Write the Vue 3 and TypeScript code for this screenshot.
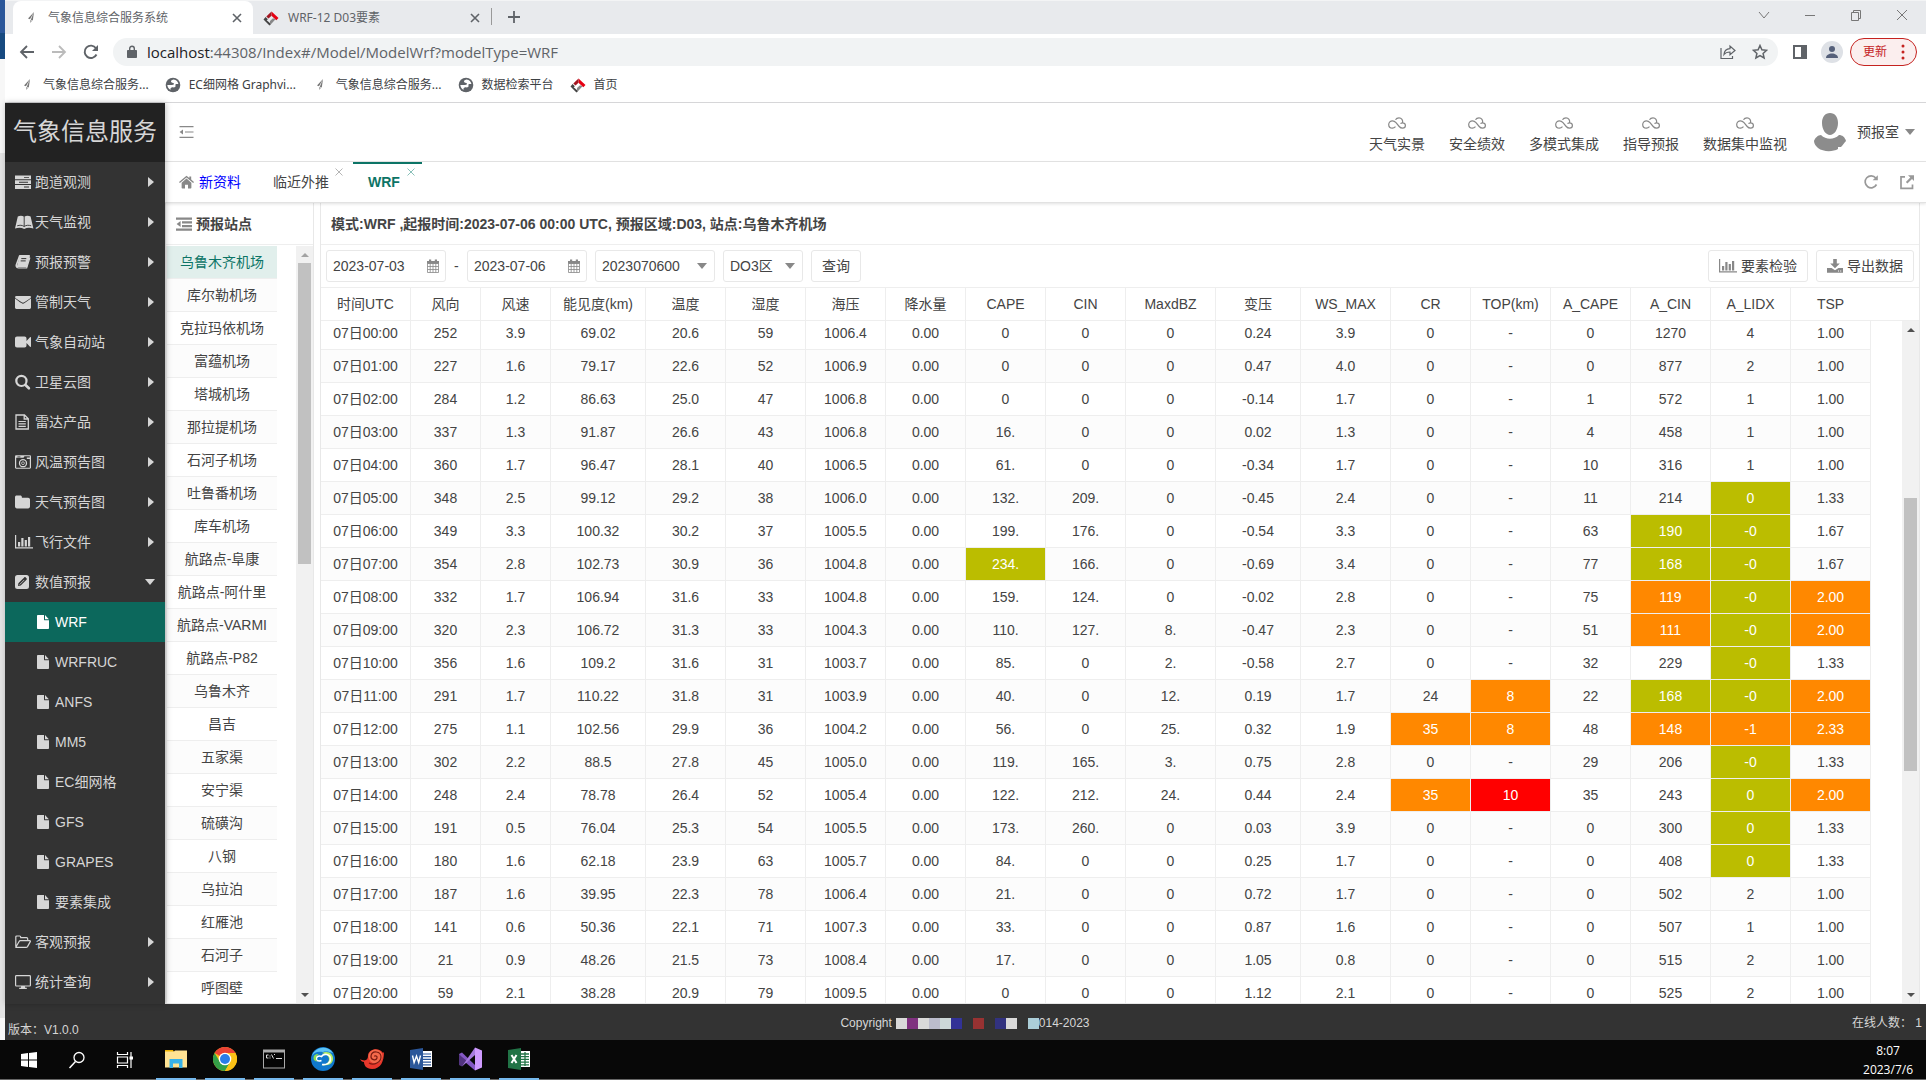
<script setup lang="ts">
import { onMounted, ref } from 'vue'

interface MenuItem {
  label: string
  icon: string
  open?: boolean
  children?: string[]
}

// Icon bodies drawn on a 16 x 16 grid, coloured by the surrounding text
const icons: Record<string, string> = {
  server:
    '<path fill="currentColor" fill-rule="evenodd" d="M0 1.5h16v3.8H0zM0 6.3h16v3.8H0zM0 11.1h16v3.8H0zM9 2.9v.9h5v-.9zM4 7.8v.9h9v-.9zM9 12.5v.9h5v-.9z"/>',
  book:
    '<path fill="currentColor" d="M2.800 2.500C5 1.500 7.500 1.500 9.200 3c1.700-1.500 4.200-1.500 6.400-.5L18.400 14.500c-3.400-1-6.400-1-9.200.5-2.800-1.500-5.800-1.500-9.200-.5z"/><path stroke="#333" stroke-width=".9" fill="none" d="M9.200 3v9.500M9.200 12.500c-2-1.500-4.500-1.500-7-.7M9.200 12.500c2-1.500 4.500-1.500 7-.7"/>',
  notebook:
    '<path fill="none" stroke="currentColor" stroke-width="1.600" stroke-linejoin="round" d="M4.700 1.800h9.500l-2.800 10.700H2.500c-1.200 0-1.400-.6-1.200-1.400z"/><path fill="currentColor" d="M4.700 1.800h9.500l-2.800 10.200H2z"/><path stroke="#333" stroke-width="1" d="M6.300 4.600h5M5.700 6.900h5"/><path fill="none" stroke="currentColor" stroke-width="1.200" d="M1.200 12c.2 1.800 1.500 2 2.300 2h8.200l3.200-10.500"/>',
  mail:
    '<path fill="currentColor" d="M0 4.400c2.300 1.800 4.600 3.400 6.400 4.700 1.100.7 2 .7 3.200 0L16 4.400v9.100c0 .8-.6 1.400-1.400 1.400H1.400C.6 14.900 0 14.300 0 13.500zM1.400 1.900h13.200c2 0 1.600 1.800.4 2.600L9.300 8.200c-.9.6-1.700.6-2.600 0L1 4.500C-.3 3.600-.3 1.900 1.400 1.900z"/>',
  video:
    '<path fill="currentColor" d="M2 2.500h7.500c1.200 0 2 .8 2 2V7L15 3.300c.4-.4 1-.2 1 .4v8.600c0 .6-.6.8-1 .4L11.500 9v2.500c0 1.200-.8 2-2 2H2c-1.200 0-2-.8-2-2v-7c0-1.200.8-2 2-2z"/>',
  search:
    '<circle cx="6.400" cy="6.900" r="5.100" fill="none" stroke="currentColor" stroke-width="2.200"/><path stroke="currentColor" stroke-width="2.600" stroke-linecap="round" d="m10.500 11 3.400 3.300"/>',
  doc:
    '<path fill="none" stroke="currentColor" stroke-width="1.300" d="M1 1h8.500L13.300 4.800V15H1zM9.200 1v4h4"/><path stroke="currentColor" stroke-width="1.200" d="M3.500 7.500h7.300M3.500 9.900h7.300M3.500 12.300h7.300"/>',
  camera:
    '<path fill="currentColor" fill-rule="evenodd" d="M1.200 1.200h13.600c.7 0 1.200.5 1.200 1.200v11.200c0 .7-.5 1.200-1.200 1.200H1.200c-.7 0-1.200-.5-1.200-1.200V2.400c0-.7.500-1.200 1.200-1.200zM1.200 5v8.700h13.600V5h-3V3.500h3V2.300H9.500L8.500 3.800H1.200zm1.200-2.500v.8h3v-.8z"/><circle cx="8" cy="9.200" r="3.500" fill="none" stroke="currentColor" stroke-width="1.300"/><circle cx="8" cy="9.200" r="1.400" fill="none" stroke="currentColor" stroke-width=".8"/>',
  folder:
    '<path fill="currentColor" d="M1.700 1.500h3.500c1 0 1.700.7 1.700 1.700v.5h6.200c1.100 0 1.900.8 1.900 1.900v7c0 1.100-.8 1.900-1.900 1.900H1.900C.8 14.500 0 13.700 0 12.600V3.200c0-1 .7-1.700 1.700-1.700z"/>',
  chart:
    '<path fill="currentColor" d="M0 1h1.200v12.300H18v1.200H0zM3 8h2.200v4.500H3zM6.300 4h2.200v8.500H6.300zM9.700 6h2.200v6.500H9.700zM13 3h2.200v9.500H13z"/>',
  edit:
    '<path fill="currentColor" fill-rule="evenodd" d="M2.500 1h9A2.500 2.500 0 0 1 14 3.500v9a2.500 2.500 0 0 1-2.500 2.500h-9A2.500 2.500 0 0 1 0 12.500v-9A2.500 2.500 0 0 1 2.500 1zM3 12l.4-2.800 5.800-5.800c.5-.4 1-.4 1.500 0l.8.9c.5.500.5 1 0 1.500L5.700 11.600z"/><path stroke="currentColor" stroke-width=".8" d="m4.600 10.600 4.700-4.700"/>',
  file:
    '<path fill="currentColor" d="M0 1.800C0 1.400.4 1 .8 1H7v4.400c0 .5.400.9.900.9H12v7.900c0 .4-.4.8-.8.8H.8c-.4 0-.8-.4-.8-.8zM8 1.100 11.900 5.200H8z"/>',
  folderOpen:
    '<path fill="none" stroke="currentColor" stroke-width="1.200" stroke-linejoin="round" d="M.8 12.600V3c0-.6.400-1 1-1h2.900c.7 0 1 .5 1 1.100v.6h5.800c.7 0 1.200.4 1.200 1.100v1.900M.8 13.200l3.300-5.700c.3-.5.700-.8 1.300-.8h9.300c.7 0 .9.400.6.900l-2.800 5c-.3.500-.8.800-1.400.8H1.300c-.4 0-.6-.1-.5-.2z"/>',
  monitor:
    '<path fill="none" stroke="currentColor" stroke-width="1.200" d="M1.400 1.600h13.200c.5 0 .8.300.8.800v8.800c0 .5-.3.800-.8.800H1.400c-.5 0-.8-.3-.8-.8V2.400c0-.5.3-.8.8-.8z"/><path fill="currentColor" d="M6.200 12h3.600l.4 1.800h1.600V15H4.200v-1.200h1.600z"/>',
  home:
    '<path fill="currentColor" d="M8 4.300 13.200 8.700v5.400c0 .5-.3.800-.8.800H9.600v-4H6.400v4H3.600c-.5 0-.8-.3-.8-.8V8.700zM8 1.200l3 2.500V2.100h2v3.300L16 8l-.9 1L8 3.100.9 9 0 8z"/>',
  outdent:
    '<path fill="currentColor" d="M0 1.500h16v2.300H0zM6 5.200h10v2.300H6zM6 8.900h10v2.300H6zM0 12.500h16v2.300H0zM4.600 5v6L.6 8z"/>',
  menuFold:
    '<path fill="currentColor" d="M.5 2h14v1.200H.5zM6 7.400h8.500v1.200H6zM.5 12.800h14V14H.5zM4 5.600v4.800L.6 8z"/>',
  calendar:
    '<path fill="none" stroke="currentColor" stroke-width=".8" d="M2.500 5.500h11v9h-11zM5.200 5.500v9M8 5.500v9M10.800 5.500v9M2.500 8.500h11M2.500 11.500h11"/><path fill="currentColor" d="M2 3h12v2.800H2zM4 1.500h2.200v3H4zM9.800 1.500H12v3H9.800z"/>',
  download:
    '<path fill="currentColor" d="M6.200 1h3.600v4.500h3L8 10.200 3.200 5.500h3zM0 10h4.500L8 12.300 11.500 10H16v4.800H0z"/><path fill="#fff" d="M11 12.500h1v1h-1zM13.200 12.500h1v1h-1z"/>',
  // drawn on an 18 x 12 grid
  cloud:
    '<path fill="none" stroke="currentColor" stroke-width="1.200" stroke-linejoin="round" d="M7.500 9.700C6.500 10.700 5.500 11.200 4.400 11.200 2.200 11.200.7 9.600.7 7.500S2.400 3.800 4.500 3.800c1.600 0 2.600.8 3.500 1.900l3.200 3.800c1 1.200 2.100 1.700 3.400 1.700 1.700 0 2.800-1.200 2.800-2.700 0-1.700-1.200-2.700-2.900-2.700C15.300 3.200 13.500.8 11 .8 9.400.8 8.200 1.500 7.500 2.700M14.500 5.800c-.8 0-1.500.3-2 .8"/>',
  refresh:
    '<path fill="none" stroke="currentColor" stroke-width="1.700" d="M13.500 10.500A6 6 0 1 1 12.800 4"/><path fill="currentColor" d="M14.800 1.200v5H9.600z"/>',
  external:
    '<path fill="none" stroke="currentColor" stroke-width="1.700" d="M6 2.800H2v11.500h11.500V10.500"/><path fill="currentColor" d="M9 1.200h6V7l-2-2-4.600 4.500-1.500-1.400L11.300 3.400z"/>',
}

const menu: MenuItem[] = [
  { label: '跑道观测', icon: 'server' },
  { label: '天气监视', icon: 'book' },
  { label: '预报预警', icon: 'notebook' },
  { label: '管制天气', icon: 'mail' },
  { label: '气象自动站', icon: 'video' },
  { label: '卫星云图', icon: 'search' },
  { label: '雷达产品', icon: 'doc' },
  { label: '风温预告图', icon: 'camera' },
  { label: '天气预告图', icon: 'folder' },
  { label: '飞行文件', icon: 'chart' },
  {
    label: '数值预报',
    icon: 'edit',
    open: true,
    children: ['WRF', 'WRFRUC', 'ANFS', 'MM5', 'EC细网格', 'GFS', 'GRAPES', '要素集成'],
  },
  { label: '客观预报', icon: 'folderOpen' },
  { label: '统计查询', icon: 'monitor' },
]

const shortcuts = ['天气实景', '安全绩效', '多模式集成', '指导预报', '数据集中监视']

const stations = [
  '乌鲁木齐机场', '库尔勒机场', '克拉玛依机场', '富蕴机场', '塔城机场', '那拉提机场',
  '石河子机场', '吐鲁番机场', '库车机场', '航路点-阜康', '航路点-阿什里', '航路点-VARMI',
  '航路点-P82', '乌鲁木齐', '昌吉', '五家渠', '安宁渠', '硫磺沟', '八钢', '乌拉泊', '红雁池',
  '石河子', '呼图壁',
]

const columns: [string, number][] = [
  ['时间UTC', 90], ['风向', 70], ['风速', 70], ['能见度(km)', 95], ['温度', 80], ['湿度', 80],
  ['海压', 80], ['降水量', 80], ['CAPE', 80], ['CIN', 80], ['MaxdBZ', 90], ['变压', 85],
  ['WS_MAX', 90], ['CR', 80], ['TOP(km)', 80], ['A_CAPE', 80], ['A_CIN', 80], ['A_LIDX', 80],
  ['TSP', 80],
]

// A trailing letter after "|" marks the alert level: y yellow, o orange, r red
const rows = `
07日00:00 252 3.9 69.02 20.6 59 1006.4 0.00 0 0 0 0.24 3.9 0 - 0 1270 4 1.00
07日01:00 227 1.6 79.17 22.6 52 1006.9 0.00 0 0 0 0.47 4.0 0 - 0 877 2 1.00
07日02:00 284 1.2 86.63 25.0 47 1006.8 0.00 0 0 0 -0.14 1.7 0 - 1 572 1 1.00
07日03:00 337 1.3 91.87 26.6 43 1006.8 0.00 16. 0 0 0.02 1.3 0 - 4 458 1 1.00
07日04:00 360 1.7 96.47 28.1 40 1006.5 0.00 61. 0 0 -0.34 1.7 0 - 10 316 1 1.00
07日05:00 348 2.5 99.12 29.2 38 1006.0 0.00 132. 209. 0 -0.45 2.4 0 - 11 214 0|y 1.33
07日06:00 349 3.3 100.32 30.2 37 1005.5 0.00 199. 176. 0 -0.54 3.3 0 - 63 190|y -0|y 1.67
07日07:00 354 2.8 102.73 30.9 36 1004.8 0.00 234.|y 166. 0 -0.69 3.4 0 - 77 168|y -0|y 1.67
07日08:00 332 1.7 106.94 31.6 33 1004.8 0.00 159. 124. 0 -0.02 2.8 0 - 75 119|o -0|y 2.00|o
07日09:00 320 2.3 106.72 31.3 33 1004.3 0.00 110. 127. 8. -0.47 2.3 0 - 51 111|o -0|y 2.00|o
07日10:00 356 1.6 109.2 31.6 31 1003.7 0.00 85. 0 2. -0.58 2.7 0 - 32 229 -0|y 1.33
07日11:00 291 1.7 110.22 31.8 31 1003.9 0.00 40. 0 12. 0.19 1.7 24 8|o 22 168|y -0|y 2.00|o
07日12:00 275 1.1 102.56 29.9 36 1004.2 0.00 56. 0 25. 0.32 1.9 35|o 8|o 48 148|o -1|o 2.33|o
07日13:00 302 2.2 88.5 27.8 45 1005.0 0.00 119. 165. 3. 0.75 2.8 0 - 29 206 -0|y 1.33
07日14:00 248 2.4 78.78 26.4 52 1005.4 0.00 122. 212. 24. 0.44 2.4 35|o 10|r 35 243 0|y 2.00|o
07日15:00 191 0.5 76.04 25.3 54 1005.5 0.00 173. 260. 0 0.03 3.9 0 - 0 300 0|y 1.33
07日16:00 180 1.6 62.18 23.9 63 1005.7 0.00 84. 0 0 0.25 1.7 0 - 0 408 0|y 1.33
07日17:00 187 1.6 39.95 22.3 78 1006.4 0.00 21. 0 0 0.72 1.7 0 - 0 502 2 1.00
07日18:00 141 0.6 50.36 22.1 71 1007.3 0.00 33. 0 0 0.87 1.6 0 - 0 507 1 1.00
07日19:00 21 0.9 48.26 21.5 73 1008.4 0.00 17. 0 0 1.05 0.8 0 - 0 515 2 1.00
07日20:00 59 2.1 38.28 20.9 79 1009.5 0.00 0 0 0 1.12 2.1 0 - 0 525 2 1.00`
  .trim()
  .split('\n')
  .map((line) => line.split(' ').map((cell) => cell.split('|')))

const levelClass: Record<string, string> = { y: 'lv-yellow', o: 'lv-orange', r: 'lv-red' }

const startDate = ref('2023-07-03')
const endDate = ref('2023-07-06')
const runTime = ref('2023070600')
const region = ref('DO3区')
const activeStation = ref(stations[0])
const gridBody = ref<HTMLElement | null>(null)

onMounted(() => {
  if (gridBody.value) gridBody.value.scrollTop = 4
})

const bookmarks = [
  { label: '气象信息综合服务...', icon: 'feather' },
  { label: 'EC细网格 Graphvi...', icon: 'globe' },
  { label: '气象信息综合服务...', icon: 'feather' },
  { label: '数据检索平台', icon: 'globe' },
  { label: '首页', icon: 'brand' },
]

const siteIcons: Record<string, string> = {
  feather:
    '<path fill="#777" d="M11 2 5 8.500l2 .8zM11 2 7.800 9.800l2 .6zM7.300 10l1.500.7-1.300 2.300z"/>',
  globe:
    '<circle cx="8" cy="8" r="7.300" fill="#5f6368"/><path fill="#fff" d="M8.500 2.500c-2 .3-3 1.500-2.300 2.600.5.900 1.800.6 2.500 1.200.8.800-.2 1.700-1.700 1.700H2.300c.2 2.300 1.500 4 3.200 4.900-.2-1.300.2-2.300 1.300-2.500 1.300-.2 2.600.4 3.500-.6.8-1-.3-1.600.2-2.400.5-.7 1.700-.4 2.900-.3-.3-2.200-2-4.300-4.900-4.600z"/>',
  brand:
    '<path fill="#e60012" d="M8.500 1.500 15.500 8l-2.200 2.300-4.800-4.600z"/><path fill="#a31621" d="M8.500 1.500v4.200L5.500 8.500 3.300 6.400z"/><path fill="#444" d="m2.600 7 2.300 2.200-1.200 1L8 14l-1.500 1.500L.5 9.500z"/><path fill="#888" d="m12.500 9.300-5.500 6V11l3-2.800z"/>',
}

const taskApps: { name: string; art: string }[] = [
  {
    name: '文件资源管理器',
    art: '<path fill="#f0b400" d="M1 3h8l1 2H1z"/><path fill="#ffe394" d="M1 4.500h9l1-1h12v17H1z"/><path fill="#37b1e8" d="M5.500 12h13v9h-3.500v-4.500H9V21H5.500z"/>',
  },
  {
    name: 'Chrome',
    art: '<circle cx="12" cy="12" r="12" fill="#fbc116"/><path fill="#ea4335" d="M12 12 1.600 6A12 12 0 0 1 22.400 6H12z"/><path fill="#34a048" d="M1.600 6A12 12 0 0 0 12 24l5.200-9L12 12 7 15z"/><path fill="#fbc116" d="M12 24A12 12 0 0 0 22.400 6H12l5.200 9z"/><circle cx="12" cy="12" r="6.300" fill="#fff"/><circle cx="12" cy="12" r="5" fill="#2b7de9"/>',
  },
  {
    name: '命令提示符',
    art: '<rect x="1" y="2.500" width="22" height="19" fill="#aaa"/><rect x="2" y="5.500" width="20" height="15" fill="#050505"/><path fill="none" stroke="#ddd" d="M6.500 8H4.500v3h2M8 8.500v1M8 10.500v1M9.500 7.500l2 4M12 7.500h1M14 11.500h6"/>',
  },
  {
    name: '浏览器',
    art: '<circle cx="12" cy="12" r="12" fill="#1078cc"/><path fill="#5cc3f5" d="M1 9C3 1 16-3 22 6c-3-1-7-2-10-1-5-1-9 0-11 4z"/><path fill="#b4ee62" d="M11 6c6-3 12 1 11 7-1 5-7 6-12 5 4 0 8-2 8-6 0-3-3-5-7-6z"/><path fill="none" stroke="#fff" stroke-width="1.600" d="M11 17.500c4 .5 8.500-1 8.500-5.500 0-5-7-6-9-2.500-3-1.500-6 .5-5 3 1 2 3.500 1.500 5 1"/><path fill="#8ddf4f" d="M2.500 11c0-3 2.500-4.500 5.500-4-2 1-3 2-3 5 0 1 .5 2 1.500 2.500-2.500 0-4-1.500-4-3.500z"/>',
  },
  {
    name: '螺旋',
    art: '<path fill="#e8372b" d="M0 12c5 3 8 1 8-3 0-8 12-9 15-3l1-1c0 9-3 17-12 17C6 22 4 18 4 15c-2 0-3-1-4-3z"/><circle cx="15.500" cy="9.500" r="7" fill="#f4694a"/><path fill="none" stroke="#7a1b12" stroke-width="1.200" d="M9 16c5 3 12-1 12-6 0-6-9-7-10-1-.5 4 5 5 6 2 .7-2-2-3-2.600-1.500"/>',
  },
  {
    name: 'Word',
    art: '<path fill="#fff" d="M12 4h11v16H12z"/><path stroke="#2b579a" stroke-width="1.200" d="M14 7h8M14 9.700h8M14 12.400h8M14 15.100h8M14 17.800h8"/><path fill="#2b579a" d="M1 3 14 1v22L1 21z"/><path fill="none" stroke="#fff" stroke-width="1.400" d="m3.500 8.500 1.600 7 2.400-6.500 2.200 6.500 1.800-7"/>',
  },
  {
    name: 'Visual Studio',
    art: '<path fill="#8458c4" d="M1 7 4 5.500 17 18v5.500L1 10z"/><path fill="#52347f" d="M1 7v11l3 1.500L9 14l-5-4z"/><path fill="#a77be0" d="M4 19.500 17 .5V8z"/><path fill="#cf9bff" d="m17 .5 7 3v17l-7 3z"/>',
  },
  {
    name: 'Excel',
    art: '<path fill="#fff" d="M12 4h11v16H12z"/><path fill="none" stroke="#217346" stroke-width="1.300" d="M14 7h8M14 9.700h8M14 12.400h8M14 15.100h8M14 17.800h8M18 5v14"/><path fill="#217346" d="M1 3 14 1v22L1 21z"/><path fill="none" stroke="#fff" stroke-width="2" d="m4.500 8 5 8M9.500 8l-5 8"/>',
  },
]

const mosaic = [
  '#d9d9d9', '#7f317f', '#d9d9d9', '#bbbccc', '#cdd8d8', '#323296', 'transparent', '#983232',
  'transparent', '#32327f', '#d9d9d9', 'transparent', '#abced8',
]
</script>

<template>
  <div class="desktop">
    <div class="window">
      <div class="behind" aria-hidden="true"></div>
      <div class="browser">
        <div class="tabstrip">
          <div class="btab active">
            <svg class="i16" viewBox="0 0 16 16" v-html="siteIcons.feather"></svg>
            <span class="btitle">气象信息综合服务系统</span>
            <button class="plain" aria-label="关闭标签页">
              <svg width="10" height="10" viewBox="0 0 10 10"><path d="m1 1 8 8M9 1 1 9" stroke="#5f6368" stroke-width="1.600" /></svg>
            </button>
          </div>
          <div class="btab second">
            <svg class="i16" viewBox="0 0 16 16" v-html="siteIcons.brand"></svg>
            <span class="btitle">WRF-12 D03要素</span>
            <button class="plain" aria-label="关闭标签页">
              <svg width="10" height="10" viewBox="0 0 10 10"><path d="m1 1 8 8M9 1 1 9" stroke="#5f6368" stroke-width="1.600" /></svg>
            </button>
          </div>
          <button class="plain newtab" aria-label="新标签页">
            <svg width="12" height="12" viewBox="0 0 12 12"><path d="M6 0v12M0 6h12" stroke="#5f6368" stroke-width="1.800" /></svg>
          </button>
          <div class="wincontrols">
            <button class="plain" aria-label="搜索标签页"><svg width="12" height="12" viewBox="0 0 12 12"><path d="m1 3 5 6 5-6" fill="none" stroke="#777" /></svg></button>
            <button class="plain" aria-label="最小化"><svg width="12" height="12" viewBox="0 0 12 12"><path d="M1 6.500h10" stroke="#777" /></svg></button>
            <button class="plain" aria-label="还原"><svg width="12" height="12" viewBox="0 0 12 12"><path d="M1.500 3.500h7v8h-7zM3.500 3.500v-2h7v8h-2" fill="none" stroke="#777" /></svg></button>
            <button class="plain" aria-label="关闭"><svg width="12" height="12" viewBox="0 0 12 12"><path d="m1 1 10 10M11 1 1 11" stroke="#777" /></svg></button>
          </div>
        </div>

        <div class="toolbar">
          <button class="plain" aria-label="后退"><svg width="16" height="16" viewBox="0 0 16 16"><path d="M15 8H2M8 2 2 8l6 6" fill="none" stroke="#5f6368" stroke-width="1.800" /></svg></button>
          <button class="plain" aria-label="前进"><svg width="16" height="16" viewBox="0 0 16 16"><path d="M1 8h13M8 2l6 6-6 6" fill="none" stroke="#bbb" stroke-width="1.800" /></svg></button>
          <button class="plain" aria-label="重新加载"><svg width="16" height="16" viewBox="0 0 16 16"><path d="M13.500 10.500A6.200 6.200 0 1 1 13 4.300" fill="none" stroke="#5f6368" stroke-width="1.900" /><path d="M15 1v6H9z" fill="#5f6368" /></svg></button>
          <div class="omnibox">
            <svg width="10" height="14" viewBox="0 0 10 14"><path d="M1 5h8c.5 0 1 .4 1 1v6c0 .6-.5 1-1 1H1c-.5 0-1-.4-1-1V6c0-.6.500-1 1-1z" fill="#5f6368" /><path d="M2.700 6V3.500c0-3 4.600-3 4.600 0V6" fill="none" stroke="#5f6368" stroke-width="1.400" /></svg>
            <span class="url"><b>localhost</b>:44308/Index#/Model/ModelWrf?modelType=WRF</span>
            <button class="plain" aria-label="分享"><svg width="16" height="16" viewBox="0 0 16 16"><path d="M1 4v10.500h11.500v-2.500M4 10.500c.3-4 2.300-5.700 6-5.800V2l5 4.500-5 4.300V8C7.500 8 5.500 8.500 4 10.500z" fill="none" stroke="#5f6368" stroke-width="1.200" /></svg></button>
            <button class="plain" aria-label="收藏"><svg width="16" height="16" viewBox="0 0 16 16"><path d="m8 1.500 1.900 4.300 4.700.5-3.500 3.100 1 4.600L8 11.600 3.900 14l1-4.600-3.500-3.100 4.700-.5z" fill="none" stroke="#5f6368" stroke-width="1.500" /></svg></button>
          </div>
          <button class="plain" aria-label="侧边栏"><svg width="14" height="14" viewBox="0 0 14 14"><path d="M0 0h14v14H0zM2 2v10h6V2z" fill="#5f6368" fill-rule="evenodd" /></svg></button>
          <button class="plain profile" aria-label="个人资料"><svg width="22" height="22" viewBox="0 0 22 22"><circle cx="11" cy="11" r="11" fill="#dee1e6" /><circle cx="11" cy="8" r="3" fill="#55607a" /><path d="M5 17c0-6 12-6 12 0z" fill="#55607a" /></svg></button>
          <button class="update">更新<svg width="4" height="16" viewBox="0 0 4 16"><path d="M2 2v.1M2 8v.1M2 14v.1" stroke="#c5221f" stroke-width="3" stroke-linecap="round" /></svg></button>
        </div>

        <div class="bookmarks">
          <a v-for="(b, i) in bookmarks" :key="i" href="#"><svg class="i16" viewBox="0 0 16 16" v-html="siteIcons[b.icon]"></svg>{{ b.label }}</a>
        </div>

        <div class="app">
          <nav class="sidebar">
            <h1>气象信息服务</h1>
            <template v-for="m in menu" :key="m.label">
              <a class="item" href="#">
                <svg class="i16" viewBox="0 0 16 16" v-html="icons[m.icon]"></svg>
                <span>{{ m.label }}</span>
                <i :class="m.open ? 'tri-down' : 'tri-right'"></i>
              </a>
              <a v-for="c in m.children" :key="c" href="#" class="item sub" :class="{ on: c === 'WRF' }">
                <svg class="i16" viewBox="0 0 16 16" v-html="icons.file"></svg>
                <span>{{ c }}</span>
              </a>
            </template>
          </nav>

          <main class="content">
            <header class="header">
              <button class="plain fold" aria-label="折叠菜单"><svg class="i16" viewBox="0 0 16 16" v-html="icons.menuFold"></svg></button>
              <nav class="shortcuts">
                <a v-for="s in shortcuts" :key="s" href="#"><svg width="18" height="12" viewBox="0 0 18 12" v-html="icons.cloud"></svg>{{ s }}</a>
              </nav>
              <svg class="avatar" width="34" height="40" viewBox="0 0 34 40"><path fill="#8c8c8c" d="M17 1c5 0 8 4 8 10 0 7-4 12-8 12S9 18 9 11C9 5 12 1 17 1zM8 23c5 5 13 5 18 0 3 0 6 2 7 6-2 2-3 4-5 6h-3v2c-5 3-15 3-20-1-2-2-4-4-4-7 1-3 4-6 7-6z" /></svg>
              <button class="plain user">预报室<i class="tri-down grey"></i></button>
            </header>

            <div class="pagetabs">
              <a class="ptab home" href="#"><svg class="i16" viewBox="0 0 16 16" v-html="icons.home"></svg>新资料</a>
              <a class="ptab" href="#">临近外推<svg class="x" viewBox="0 0 8 8"><path d="m.5.5 7 7M7.500.5l-7 7" stroke="#b5b5b5" /></svg></a>
              <a class="ptab on" href="#">WRF<svg class="x" viewBox="0 0 8 8"><path d="m.5.5 7 7M7.500.5l-7 7" stroke="#8ac0b9" /></svg></a>
              <button class="plain tool first" aria-label="刷新"><svg class="i16" viewBox="0 0 16 16" v-html="icons.refresh"></svg></button>
              <button class="plain tool" aria-label="新窗口打开"><svg class="i16" viewBox="0 0 16 16" v-html="icons.external"></svg></button>
            </div>

            <div class="panels">
              <section class="stations">
                <h2><svg class="i16" viewBox="0 0 16 16" v-html="icons.outdent"></svg>预报站点</h2>
                <div class="scrollarea list">
                  <ul>
                    <li v-for="s in stations" :key="s" :class="{ on: s === activeStation }">
                      <button @click="activeStation = s">{{ s }}</button>
                    </li>
                  </ul>
                  <div class="scrollbar short">
                    <i class="arrow"><b class="up dim"></b></i><i class="thumb"></i><i class="after"></i><i class="arrow"><b class="down"></b></i>
                  </div>
                </div>
              </section>

              <section class="forecast">
                <h2>模式:WRF ,起报时间:2023-07-06 00:00 UTC, 预报区域:D03, 站点:乌鲁木齐机场</h2>
                <form class="filters" @submit.prevent>
                  <label class="field date"><input v-model="startDate" type="text" aria-label="开始日期" /><svg class="i16" viewBox="0 0 16 16" v-html="icons.calendar"></svg></label>
                  <span class="dash">-</span>
                  <label class="field date"><input v-model="endDate" type="text" aria-label="结束日期" /><svg class="i16" viewBox="0 0 16 16" v-html="icons.calendar"></svg></label>
                  <label class="field run"><select v-model="runTime" aria-label="起报时次"><option>2023070600</option></select><i class="tri-down grey"></i></label>
                  <label class="field region"><select v-model="region" aria-label="预报区域"><option>DO3区</option></select><i class="tri-down grey"></i></label>
                  <button class="btn">查询</button>
                  <button class="btn right"><svg width="18" height="16" viewBox="0 0 18 16" v-html="icons.chart"></svg>要素检验</button>
                  <button class="btn"><svg class="i16" viewBox="0 0 16 16" v-html="icons.download"></svg>导出数据</button>
                </form>
                <div class="gridhead">
                  <table>
                    <colgroup><col v-for="c in columns" :key="c[0]" :style="{ width: c[1] + 'px' }" /></colgroup>
                    <thead><tr><th v-for="c in columns" :key="c[0]" scope="col">{{ c[0] }}</th></tr></thead>
                  </table>
                </div>
                <div class="scrollarea">
                  <div ref="gridBody" class="gridbody">
                    <table>
                      <colgroup><col v-for="c in columns" :key="c[0]" :style="{ width: c[1] + 'px' }" /></colgroup>
                      <tbody>
                        <tr v-for="(r, i) in rows" :key="i">
                          <td v-for="(c, j) in r" :key="j" :class="levelClass[c[1]]">{{ c[0] }}</td>
                        </tr>
                      </tbody>
                    </table>
                  </div>
                  <div class="scrollbar long">
                    <i class="arrow"><b class="up"></b></i><i class="before"></i><i class="thumb"></i><i class="after"></i><i class="arrow"><b class="down"></b></i>
                  </div>
                </div>
              </section>
            </div>
          </main>
        </div>

        <footer class="status">
          <span class="version">版本：V1.0.0</span>
          <span class="copy">Copyright<span class="mosaic"><i v-for="(m, i) in mosaic" :key="i" :style="{ background: m }"></i></span>014-2023</span>
          <span class="online">在线人数：&nbsp;1</span>
        </footer>
      </div>
    </div>

    <div class="taskbar">
      <div class="launch">
        <button class="task" aria-label="开始"><svg width="18" height="18" viewBox="0 0 18 18"><path fill="#fff" d="M1 3l7-1v6.500H1zM9 1.900 17 1v7.500H9zM1 9.500h7V16l-7-1zM9 9.500h8V17l-8-1z" /></svg></button>
        <button class="task" aria-label="搜索"><svg width="18" height="18" viewBox="0 0 18 18"><circle cx="11" cy="6.500" r="5" fill="none" stroke="#fff" stroke-width="1.300" /><path stroke="#fff" stroke-width="1.500" d="M7.500 10.500 1.500 17" /></svg></button>
        <button class="task" aria-label="任务视图"><svg width="18" height="18" viewBox="0 0 18 18"><path fill="none" stroke="#fff" stroke-width="1.200" d="M1.500 1v2.500h10V1M1.500 6h10v6h-10zM1.500 17v-2.500h10V17M15 1v16" /><path fill="#fff" d="M13.500 5.500h3.500v3h-3.500z" /></svg></button>
      </div>
      <button v-for="t in taskApps" :key="t.name" class="task running" :aria-label="t.name"><svg width="24" height="24" viewBox="0 0 24 24" v-html="t.art"></svg></button>
      <time class="clock"><span>8:07</span><span>2023/7/6</span></time>
    </div>
  </div>
</template>

<style>
body {
  overflow: hidden;
}
</style>

<style scoped>
* {
  box-sizing: border-box;
}
.desktop {
  display: flex;
  flex-direction: column;
  height: 100vh;
  font: 14px/20px "Liberation Sans", "Noto Sans CJK SC", sans-serif;
  color: #444;
}
a {
  color: inherit;
  text-decoration: none;
}
button,
input,
select {
  font: inherit;
  color: inherit;
}
.plain {
  display: inline-flex;
  align-items: center;
  padding: 0;
  border: 0;
  background: none;
}
.i16 {
  flex: none;
  width: 16px;
  height: 16px;
}
.window {
  display: flex;
  flex: 1;
  min-height: 0;
}
.behind {
  flex: none;
  width: 5px;
  background: linear-gradient(#2b579a 33px, #174a80 33px 59px, #f7f7f7 59px 153px, #e4e4e4 153px 1018px, #f8f8f8 1018px);
}
.browser {
  display: flex;
  flex: 1;
  flex-direction: column;
  min-width: 0;
  background: #fff;
}

/* browser chrome */
.tabstrip {
  display: flex;
  flex: none;
  height: 34px;
  padding-left: 8px;
  background: #e8eaed;
  border-top: 1px solid #f3f4f5;
  font: 12px/18px "Noto Sans", "Noto Sans CJK SC", sans-serif;
  color: #5f6368;
}
.btab {
  display: flex;
  align-items: center;
  width: 240px;
  padding: 0 11px 0 10px;
}
.btab.active {
  background: #fff;
  border-radius: 8px 8px 0 0;
}
.btab.second {
  width: 238px;
}
.btitle {
  flex: 1;
  padding-left: 9px;
}
.newtab {
  margin: 7px 0 9px;
  padding-left: 16px;
  border-left: 1px solid #999;
}
.wincontrols {
  display: flex;
  gap: 34px;
  margin-left: auto;
  padding: 0 18px 6px 0;
}
.toolbar {
  display: flex;
  flex: none;
  align-items: center;
  gap: 16px;
  height: 36px;
  padding: 0 9px 0 14px;
}
.omnibox {
  display: flex;
  flex: 1;
  align-items: center;
  gap: 16px;
  height: 28px;
  margin-left: -2px;
  margin-right: -1px;
  padding: 0 10px 0 14px;
  border-radius: 14px;
  background: #f1f3f4;
}
.url {
  flex: 1;
  margin-left: -6px;
  font: 15px/20px "Open Sans", sans-serif;
  color: #5f6368;
}
.url b {
  font-weight: 400;
  color: #202124;
}
.profile {
  margin-left: -2px;
}
.update {
  display: flex;
  align-items: center;
  justify-content: space-between;
  width: 67px;
  height: 28px;
  margin-left: -9px;
  padding: 0 11px 0 12px;
  border: 1px solid #c5221f;
  border-radius: 14px;
  background: #fbeeee;
  color: #c5221f;
  font-size: 12px;
}
.bookmarks {
  display: flex;
  flex: none;
  align-items: center;
  gap: 16px;
  height: 33px;
  padding: 0 14px 2px;
  border-bottom: 1px solid #d6d6d8;
  font: 12px/18px "Noto Sans", "Noto Sans CJK SC", sans-serif;
  color: #3c4043;
}
.bookmarks a {
  display: flex;
  align-items: center;
  gap: 8px;
}

/* application */
.app {
  display: flex;
  flex: 1;
  min-height: 0;
}
.sidebar {
  position: relative;
  z-index: 2;
  flex: none;
  width: 160px;
  overflow: hidden;
  background: #333;
  color: #d6d6d6;
  box-shadow: 1px 0 6px rgba(0, 0, 0, 0.25);
}
.sidebar h1 {
  height: 59px;
  margin: 0;
  background: #222;
  font-size: 24px;
  font-weight: 400;
  line-height: 58px;
  text-align: center;
}
.item {
  display: flex;
  align-items: center;
  gap: 4px;
  height: 40px;
  padding: 0 10px;
}
.item svg {
  overflow: visible;
}
.item span {
  flex: 1;
}
.item.sub {
  gap: 2px;
  padding-left: 32px;
}
.item.on {
  background: #0c685c;
  color: #fff;
}
.tri-right,
.tri-down {
  flex: none;
  border: solid transparent;
}
.tri-right {
  border-width: 5px 0 5px 6px;
  border-left-color: currentColor;
  margin-right: 1px;
}
.tri-down {
  border-width: 6px 5px 0;
  border-top-color: currentColor;
}
.tri-down.grey {
  border-top-color: #888;
}
.content {
  display: flex;
  flex: 1;
  flex-direction: column;
  min-width: 0;
}
.header {
  display: flex;
  flex: none;
  align-items: center;
  height: 59px;
  padding: 0 11px 0 14px;
  border-bottom: 1px solid #e6e6e6;
}
.fold {
  color: #888;
}
.shortcuts {
  display: flex;
  gap: 24px;
  margin-left: auto;
  padding-top: 6px;
}
.shortcuts a {
  display: flex;
  flex-direction: column;
  align-items: center;
  gap: 5px;
}
.shortcuts svg {
  color: #888;
}
.avatar {
  margin: 0 10px 0 26px;
}
.user {
  gap: 6px;
}
.pagetabs {
  position: relative;
  z-index: 1;
  display: flex;
  flex: none;
  height: 41px;
  padding: 0 11px 0 0;
  background: #fff;
  border-bottom: 1px solid #e2e2e2;
  box-shadow: 0 1px 3px rgba(0, 0, 0, 0.12);
}
.ptab {
  position: relative;
  display: flex;
  align-items: center;
  gap: 5px;
  margin-right: 10px;
  padding: 0 14px;
}
.ptab.home {
  margin-right: 4px;
  color: #00f;
}
.ptab.home svg {
  width: 15px;
  color: #888;
}
.ptab.on {
  border: solid #0c7466;
  border-width: 2px 0 0;
  padding: 0 22px 2px 15px;
  font-weight: 700;
  color: #0c7466;
}
.x {
  position: absolute;
  top: 6px;
  right: 7px;
  width: 8px;
  height: 8px;
}
.ptab:not(.on) .x {
  top: 6px;
  right: 0;
}
.ptab.on .x {
  top: 4px;
}
.tool {
  color: #999;
}
.tool.first {
  margin: 0 20px 0 auto;
}
.panels {
  display: flex;
  flex: 1;
  gap: 6px;
  min-height: 0;
  padding-right: 6px;
}
.stations,
.forecast {
  display: flex;
  flex-direction: column;
  border: solid #e8e8e8;
  border-width: 0 1px 1px;
}
.stations {
  flex: none;
  width: 149px;
}
.forecast {
  flex: 1;
  min-width: 0;
}
h2 {
  display: flex;
  flex: none;
  align-items: center;
  gap: 4px;
  height: 42px;
  margin: 0;
  padding-left: 10px;
  border-bottom: 1px solid #eee;
  font-size: 14px;
  font-weight: 700;
}
h2 svg {
  color: #888;
}
.scrollarea {
  display: flex;
  flex: 1;
  justify-content: space-between;
  min-height: 0;
}
.scrollarea.list {
  padding-top: 1px;
}
ul {
  width: 111px;
  margin: 0;
  padding: 0;
  overflow: hidden;
  border-left: 1px solid #eee;
  list-style: none;
}
li {
  height: 33px;
  border-bottom: 1px solid #eee;
}
li:nth-child(even) {
  background: #fcfcfc;
}
li.on {
  background: #e1efec;
  color: #0c7466;
}
li button {
  width: 100%;
  height: 32px;
  padding: 0;
  border: 0;
  background: none;
  line-height: 32px;
}
.scrollbar {
  display: flex;
  flex: none;
  flex-direction: column;
  width: 17px;
  background: #f1f1f1;
}
.arrow {
  display: flex;
  flex: none;
  align-items: center;
  justify-content: center;
  height: 17px;
}
.arrow b {
  border: solid transparent;
  color: #505050;
}
.arrow .up {
  border-width: 0 4px 4px;
  border-bottom-color: currentColor;
}
.arrow .down {
  border-width: 4px 4px 0;
  border-top-color: currentColor;
}
.arrow .dim {
  color: #a3a3a3;
}
.thumb {
  width: 13px;
  margin: 0 2px;
  background: #c1c1c1;
}
.short .thumb {
  flex: 301;
}
.short .after {
  flex: 422;
}
.long .before {
  flex: 160;
}
.long .thumb {
  flex: 273;
}
.long .after {
  flex: 215;
}

/* filters */
.filters {
  display: flex;
  flex: none;
  align-items: center;
  gap: 8px;
  height: 43px;
  padding: 0 5px;
  border-bottom: 1px solid #eee;
}
.field {
  display: flex;
  align-items: center;
  height: 32px;
  padding: 0 6px;
  border: 1px solid #e8e8e8;
  border-radius: 3px;
  background: #fff;
}
.field input,
.field select {
  flex: 1;
  width: 0;
  min-width: 0;
  padding: 0;
  border: 0;
  outline: 0;
  background: none;
  appearance: none;
}
.field svg,
.btn svg {
  color: #888;
}
.field.date,
.field.run {
  width: 120px;
}
.field.date {
  padding-right: 4px;
}
.field.run,
.field.region {
  padding-right: 7px;
}
.field.region {
  width: 80px;
}
.dash {
  width: 5px;
}
.btn {
  display: flex;
  align-items: center;
  gap: 4px;
  height: 32px;
  padding: 0 10px;
  border: 1px solid #e8e8e8;
  border-radius: 3px;
  background: #fff;
}
.btn.right {
  margin-left: auto;
}

/* data grid */
.gridhead {
  flex: none;
  height: 33px;
  border-bottom: 1px solid #eee;
  overflow: hidden;
}
.gridbody {
  flex: 1;
  min-width: 0;
  overflow: hidden;
}
table {
  width: 1550px;
  table-layout: fixed;
  border-spacing: 0;
}
th,
td {
  height: 33px;
  padding: 0;
  border: solid #eee;
  border-width: 0 1px 1px 0;
  font-weight: 400;
  text-align: center;
}
th:last-child {
  border-right-color: transparent;
}
tbody tr:nth-child(even) {
  background: #fcfcfc;
}
td.lv-yellow,
td.lv-orange,
td.lv-red {
  background-clip: padding-box;
  color: #fff;
}
.lv-yellow {
  background-color: #bbbd00;
}
.lv-orange {
  background-color: #ff8800;
}
.lv-red {
  background-color: #f00;
}

/* footer */
.status {
  display: grid;
  flex: none;
  grid-template-columns: 1fr auto 1fr;
  align-items: start;
  height: 36px;
  padding: 0 4px 0 3px;
  background: #333;
  color: #d6d6d6;
  font-size: 12px;
  line-height: 38px;
}
.version {
  padding-top: 7px;
}
.copy {
  display: flex;
}
.mosaic {
  display: flex;
  align-items: center;
  padding-left: 4px;
}
.mosaic i {
  width: 11px;
  height: 11px;
}
.online {
  text-align: right;
}

/* taskbar */
.taskbar {
  display: flex;
  flex: none;
  gap: 9px;
  height: 40px;
  padding-left: 9px;
  background: #080808;
  border-bottom: 1px solid #666;
}
.launch {
  display: flex;
  gap: 8px;
  margin-right: 2px;
}
.task {
  display: flex;
  align-items: center;
  justify-content: center;
  width: 40px;
  height: 40px;
  padding: 0;
  border: 0;
  background: none;
}
.task.running {
  border: solid #76b9ed;
  border-width: 0 0 2px;
}
.clock {
  display: flex;
  flex-direction: column;
  margin-left: auto;
  padding: 1px 13px 0 0;
  color: #fff;
  font: 12px/19px "Open Sans", sans-serif;
  text-align: center;
}
</style>
